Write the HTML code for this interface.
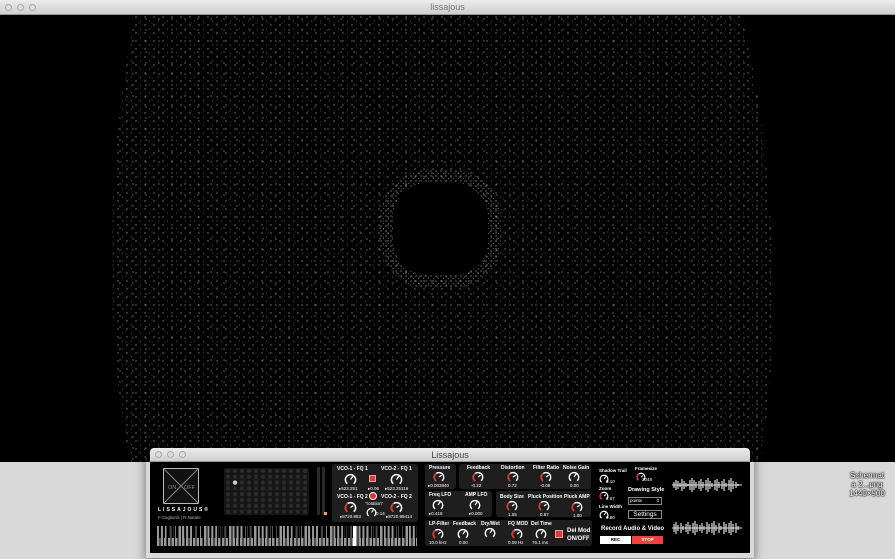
<!DOCTYPE html>
<html><head><meta charset="utf-8"><style>
*{margin:0;padding:0;box-sizing:border-box}
body{width:895px;height:559px;overflow:hidden;background:#d9d9d9;font-family:"Liberation Sans",sans-serif;position:relative}
.a{position:absolute}
.tb{background:linear-gradient(#ececec,#cfcfcf);border-bottom:1px solid #999}
.dot{position:absolute;width:7px;height:7px;border-radius:50%;border:1px solid #aaa;background:#ddd}
.box{position:absolute;background:#1e1e1e;border-radius:3px}
.l{position:absolute;color:#fff;font-size:5px;font-weight:bold;white-space:nowrap}
.v{position:absolute;color:#fff;font-size:4.5px;white-space:nowrap}
</style></head><body>
<svg width="0" height="0" style="position:absolute">
<defs>
<pattern id="p1" width="9" height="8" patternUnits="userSpaceOnUse">
<circle cx="1" cy="2" r="0.6" fill="#aaa"/><circle cx="5.5" cy="6" r="0.5" fill="#777"/>
</pattern>
<pattern id="p2" width="13" height="11" patternUnits="userSpaceOnUse">
<circle cx="3" cy="4" r="0.6" fill="#999"/><circle cx="9" cy="8" r="0.5" fill="#666"/>
</pattern>
<pattern id="p3" width="5" height="5" patternUnits="userSpaceOnUse">
<circle cx="1" cy="1" r="0.6" fill="#ccc"/><circle cx="3.5" cy="3.5" r="0.5" fill="#999"/>
</pattern>
<pattern id="gp" x="0" y="0" width="7" height="5.8" patternUnits="userSpaceOnUse"><circle cx="4" cy="3" r="2" fill="#2c2c2c"/></pattern>
<symbol id="kw" viewBox="0 0 14 14"><path d="M3.5 11.5 A5.5 5.5 0 1 1 10.5 11.5" fill="none" stroke="#fff" stroke-width="1.6"/><line x1="7" y1="7" x2="9.5" y2="3.5" stroke="#fff" stroke-width="1.4"/></symbol>
<symbol id="kr" viewBox="0 0 14 14"><path d="M3.5 11.5 A5.5 5.5 0 1 1 10.5 11.5" fill="none" stroke="#fff" stroke-width="1.6"/><path d="M3.5 11.5 A5.5 5.5 0 0 1 4 2.8" fill="none" stroke="#e03030" stroke-width="1.8"/><line x1="7" y1="7" x2="10" y2="5" stroke="#fff" stroke-width="1.4"/></symbol>
</defs></svg>

<div class="a tb" style="left:0;top:0;width:895px;height:15px"></div>
<div class="dot" style="left:5px;top:4px"></div><div class="dot" style="left:17px;top:4px"></div><div class="dot" style="left:29px;top:4px"></div>
<div class="a" style="left:0;top:2px;width:895px;text-align:center;font-size:9px;color:#777">lissajous</div>
<div class="a" style="left:0;top:15px;width:895px;height:447px;background:#000"></div>
<svg class="a" style="left:0;top:15px" width="895" height="447">
<path d="M135 0 L742 0 C770 120 785 300 760 447 L130 447 C100 300 110 120 135 0Z" fill="url(#p1)"/>
<path d="M135 0 L742 0 C770 120 785 300 760 447 L130 447 C100 300 110 120 135 0Z" fill="url(#p2)"/>
<rect x="380" y="155" width="121" height="118" rx="48" fill="url(#p3)" opacity="0.8"/>
<rect x="393" y="168" width="95" height="92" rx="34" fill="#000"/>
</svg>

<div class="a" style="left:842px;top:471px;width:50px;text-align:center;font-size:8px;line-height:9px;color:#fff;text-shadow:0 0 1px #000,0 0 1px #000,0 0 2px #000">Schermat<br>a 2...png<br>1440×900</div>

<div class="a" style="left:146px;top:450px;width:608px;height:108px;box-shadow:0 4px 10px rgba(0,0,0,.5)"></div>
<div class="a tb" style="left:150px;top:448px;width:600px;height:14px;border-radius:4px 4px 0 0"></div>
<div class="dot" style="left:155px;top:451px"></div><div class="dot" style="left:167px;top:451px"></div><div class="dot" style="left:179px;top:451px"></div>
<div class="a" style="left:150px;top:450px;width:600px;text-align:center;font-size:9px;color:#444">Lissajous</div>
<div class="a" style="left:150px;top:462px;width:600px;height:91px;background:#000"></div>

<svg class="a" style="left:163px;top:468px" width="36" height="36"><rect x="0.5" y="0.5" width="35" height="35" fill="#111" stroke="#bbb"/><line x1="0" y1="0" x2="36" y2="36" stroke="#888"/><line x1="36" y1="0" x2="0" y2="36" stroke="#888"/><text x="5" y="21" font-size="5.5" fill="#888" font-family="Liberation Sans">ON</text><text x="21" y="21" font-size="5.5" fill="#888" font-family="Liberation Sans">OFF</text></svg>
<div class="l" style="left:158px;top:507px;letter-spacing:2px">LISSAJOUS®</div>
<div class="v" style="left:158px;top:515px;color:#aaa">F.Gagliardi | R.Natale</div>

<svg class="a" style="left:224px;top:468px" width="85" height="47"><rect width="85" height="47" rx="2" fill="#161616"/>
<rect x="0" y="0" width="85" height="47" fill="url(#gp)"/>
<circle cx="11" cy="14.6" r="2.2" fill="#ccc"/>
</svg>
<div class="a" style="left:317px;top:467px;width:3px;height:48px;background:#2a2a2a"></div>
<div class="a" style="left:322px;top:467px;width:3px;height:48px;background:#2a2a2a"></div>
<div class="a" style="left:324px;top:512px;width:3px;height:3px;background:#e8a060"></div>

<div class="a" style="left:157px;top:526px;width:260px;height:20px;background:repeating-linear-gradient(90deg,#999 0 2.5px,#000 2.5px 3.6px)"></div>
<div class="a" style="left:157px;top:526px;width:260px;height:12px;background:repeating-linear-gradient(90deg,transparent 0 2px,#000 2px 4px,transparent 4px 6px,#000 6px 8px,transparent 8px 11px,#000 11px 13px,transparent 13px 15px,#000 15px 17px,transparent 17px 19px,#000 19px 21px,transparent 21px 25px);background-size:25.2px 12px"></div>
<div class="a" style="left:353px;top:526px;width:3px;height:20px;background:#fff"></div>

<div class="box" style="left:332px;top:464px;width:86px;height:58px"></div>
<div class="l" style="left:337px;top:466px">VCO-1 - FQ 1</div><div class="l" style="left:381px;top:466px">VCO-2 - FQ 1</div>
<svg class="a" style="left:344px;top:473px" width="13" height="13"><use href="#kw"/></svg>
<svg class="a" style="left:390px;top:473px" width="13" height="13"><use href="#kw"/></svg>
<div class="a" style="left:369px;top:475px;width:7px;height:7px;background:#d04040;border:1px solid #f99"></div>
<div class="v" style="left:339px;top:486px">▸523.251</div><div class="v" style="left:368px;top:486px">▸0.06</div><div class="v" style="left:385px;top:486px">▸523.25116</div>
<div class="l" style="left:337px;top:494px">VCO-1 - FQ 2</div><div class="l" style="left:381px;top:494px">VCO-2 - FQ 2</div>
<div class="a" style="left:369px;top:492px;width:8px;height:8px;border-radius:50%;background:#e03030;border:1px solid #fff"></div>
<div class="v" style="left:365px;top:501px">"rotation"</div>
<svg class="a" style="left:344px;top:501px" width="13" height="13"><use href="#kr"/></svg>
<svg class="a" style="left:390px;top:501px" width="13" height="13"><use href="#kr"/></svg>
<svg class="a" style="left:366px;top:507px" width="11" height="11"><use href="#kw"/></svg>
<div class="v" style="left:340px;top:514px">▸8720.853</div><div class="v" style="left:376px;top:511px">0.14</div><div class="v" style="left:386px;top:514px">▸8720.99414</div>

<div class="box" style="left:425px;top:464px;width:31px;height:25px"></div>
<div class="box" style="left:459px;top:464px;width:132px;height:25px"></div>
<div class="box" style="left:425px;top:491px;width:67px;height:26px"></div>
<div class="box" style="left:496px;top:491px;width:95px;height:26px"></div>
<div class="box" style="left:425px;top:520px;width:167px;height:26px"></div>

<div class="l" style="left:429px;top:465px">Pressure</div>
<div class="l" style="left:467px;top:465px">Feedback</div><div class="l" style="left:501px;top:465px">Distortion</div><div class="l" style="left:533px;top:465px">Filter Ratio</div><div class="l" style="left:563px;top:465px">Noise Gain</div>
<svg class="a" style="left:433px;top:471px" width="12" height="12"><use href="#kr"/></svg>
<svg class="a" style="left:472px;top:471px" width="12" height="12"><use href="#kr"/></svg>
<svg class="a" style="left:507px;top:471px" width="12" height="12"><use href="#kr"/></svg>
<svg class="a" style="left:540px;top:471px" width="12" height="12"><use href="#kr"/></svg>
<svg class="a" style="left:568px;top:471px" width="12" height="12"><use href="#kw"/></svg>
<div class="v" style="left:428px;top:483px">▸0.003940</div><div class="v" style="left:471px;top:483px">-0.22</div><div class="v" style="left:508px;top:483px">0.72</div><div class="v" style="left:540px;top:483px">-0.09</div><div class="v" style="left:570px;top:483px">0.00</div>

<div class="l" style="left:429px;top:492px">Freq LFO</div><div class="l" style="left:465px;top:492px">AMP LFO</div>
<div class="l" style="left:500px;top:494px">Body Size</div><div class="l" style="left:528px;top:494px">Pluck Position</div><div class="l" style="left:564px;top:494px">Pluck AMP</div>
<svg class="a" style="left:432px;top:499px" width="12" height="12"><use href="#kw"/></svg>
<svg class="a" style="left:469px;top:499px" width="12" height="12"><use href="#kw"/></svg>
<svg class="a" style="left:506px;top:500px" width="12" height="12"><use href="#kr"/></svg>
<svg class="a" style="left:538px;top:500px" width="12" height="12"><use href="#kr"/></svg>
<svg class="a" style="left:571px;top:501px" width="12" height="12"><use href="#kr"/></svg>
<div class="v" style="left:429px;top:511px">▸0.418</div><div class="v" style="left:469px;top:511px">▸0.000</div><div class="v" style="left:508px;top:512px">1.55</div><div class="v" style="left:540px;top:512px">0.87</div><div class="v" style="left:573px;top:513px">1.00</div>

<div class="l" style="left:429px;top:521px">LP-Filter</div><div class="l" style="left:453px;top:521px">Feedback</div><div class="l" style="left:481px;top:521px">Dry/Wet</div><div class="l" style="left:508px;top:521px">FQ MOD</div><div class="l" style="left:531px;top:521px">Del Time</div>
<svg class="a" style="left:432px;top:528px" width="12" height="12"><use href="#kr"/></svg>
<svg class="a" style="left:457px;top:528px" width="12" height="12"><use href="#kw"/></svg>
<svg class="a" style="left:484px;top:527px" width="12" height="12"><use href="#kw"/></svg>
<svg class="a" style="left:511px;top:528px" width="12" height="12"><use href="#kr"/></svg>
<svg class="a" style="left:535px;top:528px" width="12" height="12"><use href="#kw"/></svg>
<div class="v" style="left:429px;top:540px">10.0 kHz</div><div class="v" style="left:459px;top:540px">0.00</div><div class="v" style="left:508px;top:540px">0.09 Hz</div><div class="v" style="left:532px;top:540px">76.1 ms</div>
<div class="a" style="left:555px;top:530px;width:8px;height:8px;background:#d04040;border:1px solid #f99"></div>
<div class="l" style="left:567px;top:527px;font-size:6px;line-height:8px">Del Mod<br>ON/OFF</div>

<div class="l" style="left:599px;top:468px;font-size:4.5px">Shadow Trail</div><div class="l" style="left:635px;top:466px;font-size:4.5px">Framesize</div>
<svg class="a" style="left:599px;top:474px" width="10" height="10"><use href="#kw"/></svg><div class="v" style="left:606px;top:479px">0.10</div>
<svg class="a" style="left:636px;top:472px" width="10" height="10"><use href="#kr"/></svg><div class="v" style="left:642px;top:477px">2048</div>
<div class="l" style="left:599px;top:486px;font-size:4.5px">Zoom</div>
<svg class="a" style="left:599px;top:491px" width="10" height="10"><use href="#kr"/></svg><div class="v" style="left:606px;top:496px">2.67</div>
<div class="l" style="left:628px;top:487px;font-size:5.5px">Drawing Style</div>
<div class="a" style="left:628px;top:497px;width:34px;height:8px;border:1px solid #888;color:#fff;font-size:4.5px;padding-left:1px">points<span style="float:right;padding-right:1px">⇕</span></div>
<div class="l" style="left:599px;top:504px;font-size:4.5px">Line Width</div>
<svg class="a" style="left:599px;top:510px" width="10" height="10"><use href="#kw"/></svg><div class="v" style="left:606px;top:515px">0.80</div>
<div class="a" style="left:628px;top:510px;width:34px;height:9px;border:1px solid #888;color:#fff;font-size:6.5px;text-align:center;line-height:7px">Settings</div>
<div class="l" style="left:601px;top:526px;font-size:6px">Record Audio &amp; Video</div>
<div class="a" style="left:600px;top:536px;width:31px;height:8px;background:#fff;font-size:4.5px;text-align:center;line-height:8px;font-weight:bold">REC</div>
<div class="a" style="left:632px;top:536px;width:31px;height:8px;background:#f04040;color:#fff;font-size:4.5px;text-align:center;line-height:8px;font-weight:bold">STOP</div>
<svg class="a" style="left:672px;top:477px" width="70" height="16"><path d="M0 8 H70" stroke="#ddd" stroke-width="1"/><path d="M2 5v6M4 3v10M6 4v8M8 6v4M10 2v12M12 4v8M14 6v4M16 7v2M18 3v10M20 1v14M22 3v10M24 5v6M27 4v8M29 2v12M31 5v6M34 3v10M36 1v14M38 4v8M40 6v4M43 3v10M45 2v12M47 5v6M50 4v8M52 2v12M54 6v4M57 3v10M59 1v14M61 4v8M64 5v6M66 7v2" stroke="#ddd" stroke-width="1.2"/></svg>
<svg class="a" style="left:672px;top:520px" width="70" height="16"><path d="M0 8 H70" stroke="#ddd" stroke-width="1"/><path d="M2 4v8M4 2v12M6 5v6M9 3v10M11 6v4M14 4v8M16 2v12M18 5v6M21 3v10M23 1v14M25 4v8M28 5v6M30 3v10M32 6v4M35 2v12M37 4v8M40 3v10M42 1v14M44 5v6M47 3v10M49 6v4M52 2v12M54 4v8M57 3v10M59 1v14M61 4v8M64 3v10M66 6v4" stroke="#ddd" stroke-width="1.2"/></svg>
</body></html>
